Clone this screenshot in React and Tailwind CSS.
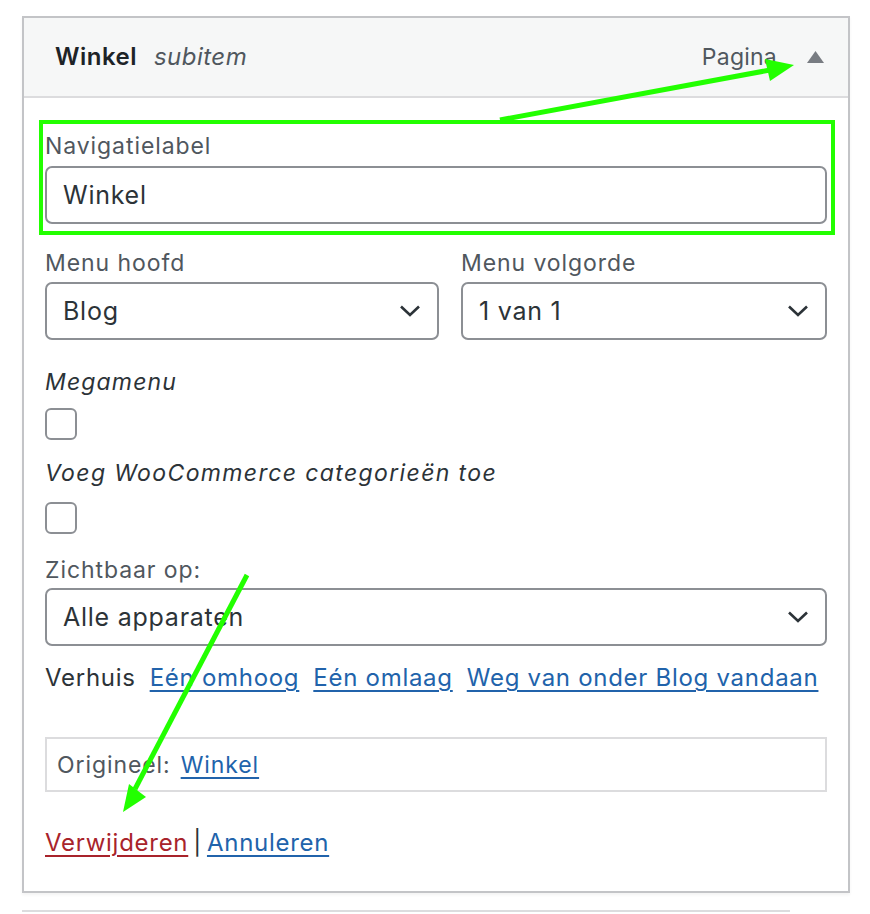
import React from "react";

function Chevron() {
  return (
    <svg width="22" height="14" viewBox="0 0 22 14" className="shrink-0">
      <path d="M2 2.5 L11 11 L20 2.5" fill="none" stroke="#2c3338" strokeWidth="2.6" />
    </svg>
  );
}

function SelectBox({ value, className = "" }) {
  return (
    <div
      className={`flex h-[58px] items-center justify-between rounded-[7px] border-2 border-[#8c8f94] bg-white pl-[16px] pr-[16px] text-[25px] tracking-[0.03em] text-[#2c3338] ${className}`}
    >
      <span>{value}</span>
      <Chevron />
    </div>
  );
}

function Checkbox() {
  return <div className="h-[32px] w-[32px] rounded-[6px] border-2 border-[#8c8f94] bg-white" />;
}

const linkClass =
  "text-[#2163ab] underline decoration-[2px] underline-offset-[4px]";

export default function App() {
  return (
    <div
      className="relative h-[914px] w-[870px] overflow-hidden bg-white"
      style={{ fontFamily: "Inter, 'Noto Sans', sans-serif" }}
    >
      <div className="ml-[22px] mt-[16px] w-[828px] border-2 border-[#c3c4c7] bg-white shadow-[0_2px_3px_rgba(0,0,0,0.05)]">
        <div className="flex h-[80px] items-center justify-between border-b-2 border-[#dcdcde] bg-[#f6f7f7] pl-[31px] pr-[24px]">
          <div className="flex items-baseline gap-[17px] text-[24px] tracking-[0.02em] text-[#1d2327]">
            <span className="font-semibold">Winkel</span>
            <span className="italic text-[#50575e]">subitem</span>
          </div>
          <div className="flex items-center gap-[30px] text-[23px] tracking-[0.01em] text-[#50575e]">
            <span>Pagina</span>
            <svg width="17" height="12" viewBox="0 0 17 12">
              <path d="M8.5 0 L17 12 L0 12 Z" fill="#787c82" />
            </svg>
          </div>
        </div>

        <div className="px-[21px] pb-[35px] pt-[35px] text-[23px] leading-[26px] tracking-[0.04em] text-[#50575e]">
          <div className="mb-[7px]">Navigatielabel</div>
          <div className="flex h-[58px] items-center rounded-[7px] border-2 border-[#8c8f94] bg-white pl-[16px] text-[25px] tracking-[0.03em] text-[#2c3338]">
            Winkel
          </div>

          <div className="mt-[26px] grid grid-cols-[394px_1fr] gap-x-[22px]">
            <div>
              <div className="mb-[6px]">Menu hoofd</div>
              <SelectBox value="Blog" />
            </div>
            <div>
              <div className="mb-[6px]">Menu volgorde</div>
              <SelectBox value="1 van 1" />
            </div>
          </div>

          <div className="mt-[29px] italic tracking-[0.05em] text-[#2c3338]">Megamenu</div>
          <div className="mt-[13px]">
            <Checkbox />
          </div>

          <div className="mt-[20px] italic tracking-[0.06em] text-[#2c3338]">
            Voeg WooCommerce categorieën toe
          </div>
          <div className="mt-[16px]">
            <Checkbox />
          </div>

          <div className="mt-[23px] mb-[5px]">Zichtbaar op:</div>
          <SelectBox value="Alle apparaten" />

          <div className="mt-[19px] flex gap-[14px] text-[24px] tracking-[0.03em] text-[#2c3338]">
            <span>Verhuis</span>
            <span className={linkClass}>Eén omhoog</span>
            <span className={linkClass}>Eén omlaag</span>
            <span className={linkClass}>Weg van onder Blog vandaan</span>
          </div>

          <div className="mt-[46px] flex h-[55px] items-center gap-[10px] border-2 border-[#dcdcde] pl-[10px]">
            <span>Origineel:</span>
            <span className={linkClass}>Winkel</span>
          </div>

          <div className="mt-[38px] text-[24px] tracking-[0.03em] text-[#2c3338]">
            <span className="text-[#a8232b] underline decoration-[2px] underline-offset-[4px]">Verwijderen</span>
            <span className="mx-[5px]">|</span>
            <span className={linkClass}>Annuleren</span>
          </div>
        </div>
      </div>

      <div className="ml-[22px] mt-[17px] h-[2px] w-[768px] bg-[#dcdcde]" />

      {/* annotation overlay */}
      <div className="pointer-events-none absolute left-[39px] top-[120px] h-[115px] w-[796px] border-[4px] border-[#22ff00]" />
      <svg className="pointer-events-none absolute left-0 top-0" width="870" height="914">
        <line x1="500" y1="120" x2="770" y2="70" stroke="#22ff00" strokeWidth="5" />
        <path d="M794 65 L765 59 L770 81 Z" fill="#22ff00" />
        <line x1="247" y1="575" x2="135" y2="789" stroke="#22ff00" strokeWidth="5" />
        <path d="M123 812 L129 784 L146 797 Z" fill="#22ff00" />
      </svg>
    </div>
  );
}
